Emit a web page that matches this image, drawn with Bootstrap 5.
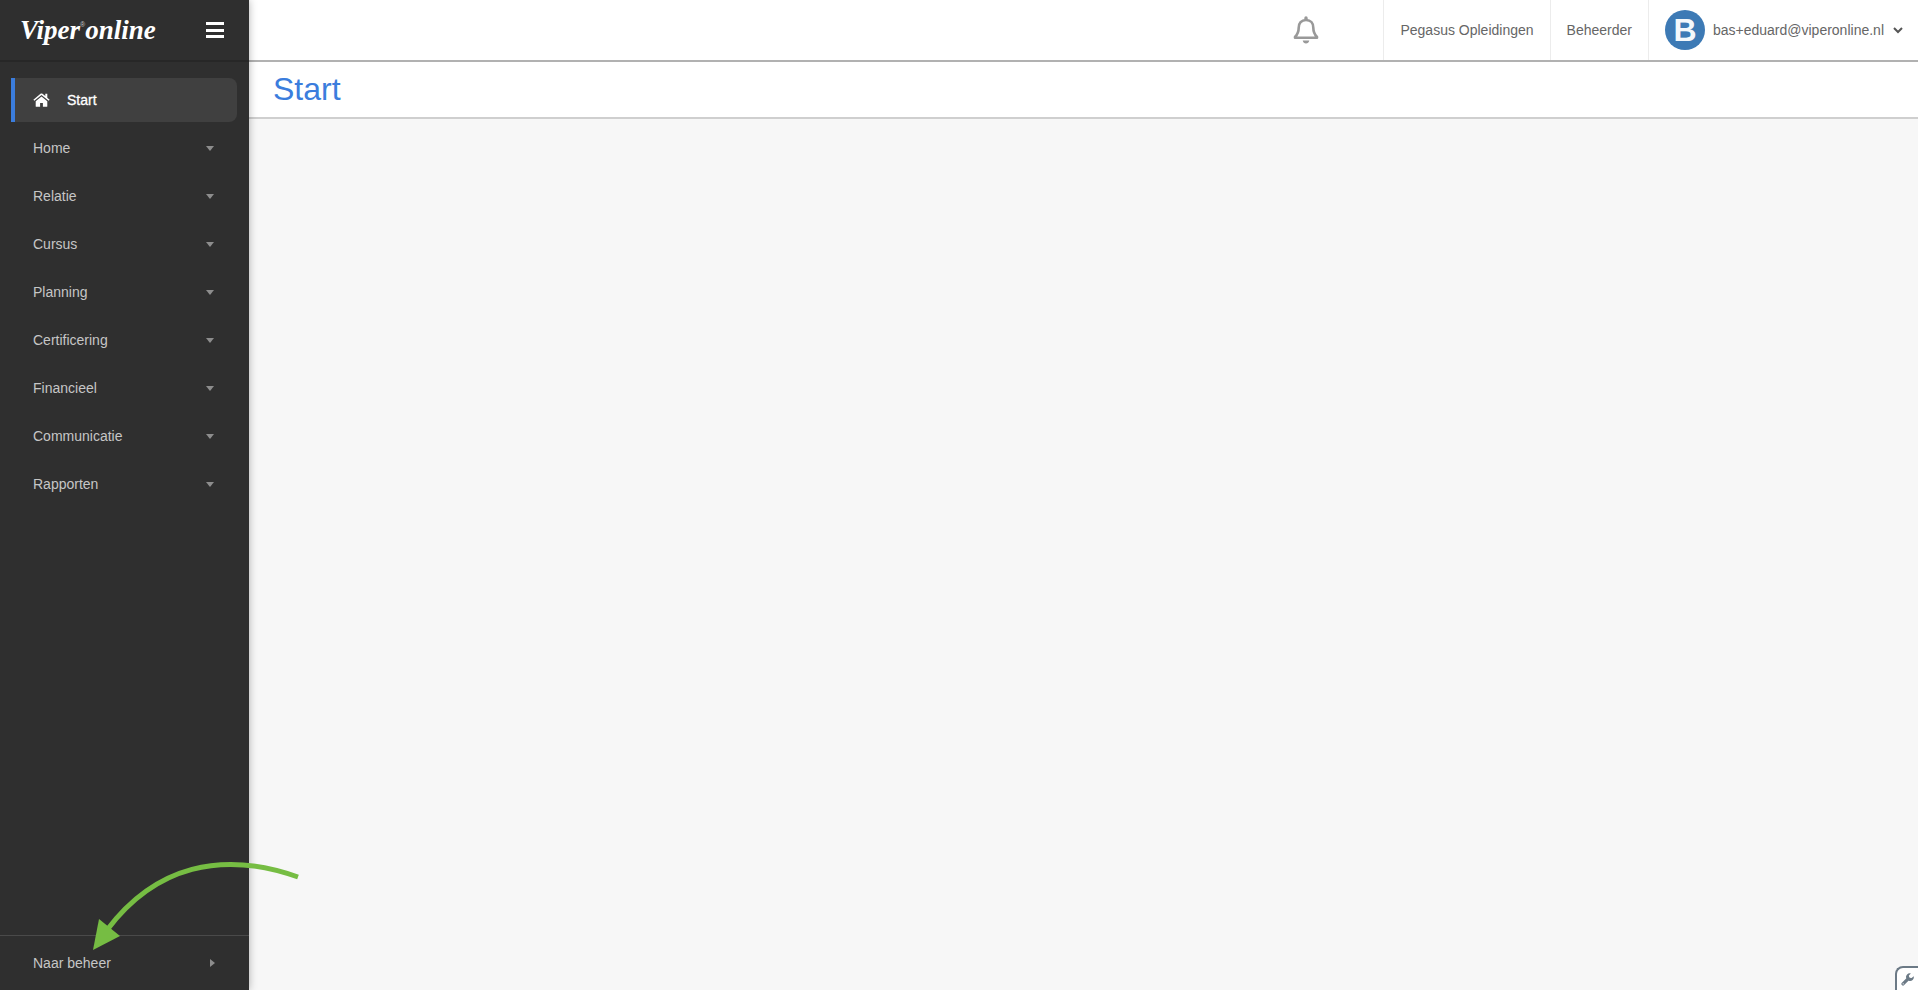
<!DOCTYPE html>
<html lang="nl">
<head>
<meta charset="utf-8">
<meta name="viewport" content="width=device-width, initial-scale=1">
<title>Start - Viper online</title>
<link href="https://cdn.jsdelivr.net/npm/bootstrap@5.3.0/dist/css/bootstrap.min.css" rel="stylesheet">
<style>
  body { font-family: "Liberation Sans", Arial, sans-serif; font-size: 14px; line-height: 20px; background: #f7f7f7; color: #666; }
  a { color: inherit; text-decoration: none; }
  .sidebar { width: 249px; background: #2f2f2f; color: #c6c6c6; box-shadow: 0 0 8px rgba(0,0,0,.3); z-index: 2; }
  .brandbar { height: 62px; padding: 0 25px 0 20px; border-bottom: 2px solid #272727; }
  .brandname { font: italic bold 27px/36px "Liberation Serif", serif; color: #fff; }
  .brandname sup { font: 7px/8px "Liberation Sans", sans-serif; top: -12px; color: #ccc; }
  .menu { padding: 16px 12px 16px 11px; gap: 4px; }
  .menu .nav-link { height: 44px; padding: 0 23px 0 22px; color: #c6c6c6; }
  .menu .nav-link.active { background: #404040; border-left: 4px solid #3b7ddd; border-radius: 0 8px 8px 0; padding-left: 18px; color: #fff; gap: 17px; -webkit-text-stroke: 0.3px #fff; }
  .menu-foot { height: 55px; padding: 0 34px 0 33px; border-top: 1px solid #4a4a4a; }
  .caret { fill: #8d8d8d; }
  .topbar { height: 62px; padding-right: 14px; background: #fff; border-bottom: 2px solid #b1b1b1; }
  .topbar .cell { padding: 0 16px; border-left: 1px solid #ececec; }
  .topbar .cell:last-child { padding-right: 0; }
  .topbar .alerts { margin-right: 64px; }
  .avatar { width: 40px; height: 40px; background: #3d7ab5; color: #f4f8fb; font-size: 32px; font-weight: bold; }
  .titlebar { height: 57px; padding: 0 24px 2px; background: #fff; border-bottom: 2px solid #cfcfcf; }
  .titlebar h1 { font-size: 32px; line-height: 40px; color: #3b7ddd; }
  .tool { width: 23px; height: 24px; background: #fff; border: solid #6c7a86; border-width: 2px 0 0 2px; border-radius: 8px 0 0 0; }
  .pointer { left: 88px; bottom: 36px; z-index: 5; pointer-events: none; }
</style>
</head>
<body>
<div class="d-flex min-vh-100 position-relative">
  <aside class="sidebar d-flex flex-column flex-shrink-0">
    <div class="brandbar d-flex align-items-center justify-content-between">
      <a href="#" class="brandname">Viper<sup>®</sup>online</a>
      <button type="button" class="btn p-0 border-0 d-flex" aria-label="Menu">
        <svg width="18" height="18" viewBox="0 0 18 18" fill="#fff"><path d="M0 1h18v3H0zM0 8h18v3H0zM0 14h18v3H0z"/></svg>
      </button>
    </div>
    <nav class="menu nav flex-column flex-nowrap flex-grow-1">
      <a href="#" class="nav-link active d-flex align-items-center" aria-current="page">
        <svg width="17" height="14" viewBox="0 0 17 14" fill="#fff"><path d="M8.500 3.600 2.700 8.300v4.900c0 .4.200.6.600.6h3.800v-3.900h2.800v3.900h3.800c.4 0 .6-.2.600-.6V8.300z"/><path d="M8.500.4c-.4 0-.7.100-1 .4L.4 6.700l.9 1.100 7.200-5.900 7.200 5.900.9-1.100-2.300-1.900V.8h-2v2.300L9.500.8c-.3-.3-.6-.4-1-.4z"/></svg>
        <span>Start</span>
      </a>
      <a href="#" class="nav-link d-flex align-items-center justify-content-between">Home<svg class="caret" width="8" height="5"><path d="M0 0h8L4 5z"/></svg></a>
      <a href="#" class="nav-link d-flex align-items-center justify-content-between">Relatie<svg class="caret" width="8" height="5"><path d="M0 0h8L4 5z"/></svg></a>
      <a href="#" class="nav-link d-flex align-items-center justify-content-between">Cursus<svg class="caret" width="8" height="5"><path d="M0 0h8L4 5z"/></svg></a>
      <a href="#" class="nav-link d-flex align-items-center justify-content-between">Planning<svg class="caret" width="8" height="5"><path d="M0 0h8L4 5z"/></svg></a>
      <a href="#" class="nav-link d-flex align-items-center justify-content-between">Certificering<svg class="caret" width="8" height="5"><path d="M0 0h8L4 5z"/></svg></a>
      <a href="#" class="nav-link d-flex align-items-center justify-content-between">Financieel<svg class="caret" width="8" height="5"><path d="M0 0h8L4 5z"/></svg></a>
      <a href="#" class="nav-link d-flex align-items-center justify-content-between">Communicatie<svg class="caret" width="8" height="5"><path d="M0 0h8L4 5z"/></svg></a>
      <a href="#" class="nav-link d-flex align-items-center justify-content-between">Rapporten<svg class="caret" width="8" height="5"><path d="M0 0h8L4 5z"/></svg></a>
    </nav>
    <a href="#" class="menu-foot d-flex align-items-center justify-content-between">Naar beheer<svg class="caret" width="5" height="8"><path d="M0 0v8l5-4z"/></svg></a>
  </aside>

  <div class="d-flex flex-column flex-grow-1">
    <header class="topbar d-flex justify-content-end">
      <button type="button" class="alerts btn p-0 border-0 d-flex align-items-center" aria-label="Meldingen">
        <svg width="26" height="30" viewBox="0 0 26 30" fill="none"><path d="M13 5c-4.700 0-7.300 3.400-7.300 7.700 0 5-1.200 6.700-3.700 9.200v.9h22v-.9c-2.500-2.500-3.700-4.200-3.700-9.200C20.300 8.400 17.700 5 13 5z" stroke="#999" stroke-width="2.600" stroke-linejoin="round"/><path d="M11.300 4.500V3a1.700 1.700 0 0 1 3.400 0v1.500zM9.700 25.600h6.600c-.4 1.800-1.600 3-3.300 3s-2.900-1.200-3.300-3z" fill="#999"/></svg>
      </button>
      <a href="#" class="cell d-flex align-items-center">Pegasus Opleidingen</a>
      <a href="#" class="cell d-flex align-items-center">Beheerder</a>
      <a href="#" class="cell d-flex align-items-center gap-2">
        <span class="avatar rounded-circle d-flex align-items-center justify-content-center">B</span>
        <span>bas+eduard@viperonline.nl</span>
        <svg width="12" height="8" viewBox="0 0 12 8" fill="none" stroke="#555" stroke-width="2"><path d="m2 2 4 4 4-4"/></svg>
      </a>
    </header>
    <main class="flex-grow-1">
      <div class="titlebar d-flex align-items-center"><h1 class="m-0 fw-normal">Start</h1></div>
    </main>
  </div>

  <svg class="pointer position-absolute" width="216" height="96" viewBox="88 858 216 96"><path d="M107 930C155 866 222 850 298 877" fill="none" stroke="#76bd43" stroke-width="5"/><path d="m93 950 6-31 21 17z" fill="#76bd43"/></svg>
  <button type="button" class="tool position-fixed bottom-0 end-0 p-0 d-flex align-items-center justify-content-center" aria-label="Instellingen">
    <svg width="13" height="13" viewBox="0 0 16 16"><path d="M2.500 13.500 9 7" stroke="#6c7a86" stroke-width="4" stroke-linecap="round"/><path d="M15.600 3.900a4.600 4.600 0 0 1-6 5.600L6.500 6.500a4.600 4.600 0 0 1 5.700-6L9.700 3l.5 2.800 2.900.5z" fill="#6c7a86"/><circle cx="2.700" cy="13.300" r=".8" fill="#fff"/></svg>
  </button>
</div>
<script src="https://cdn.jsdelivr.net/npm/bootstrap@5.3.0/dist/js/bootstrap.bundle.min.js"></script>
</body>
</html>
